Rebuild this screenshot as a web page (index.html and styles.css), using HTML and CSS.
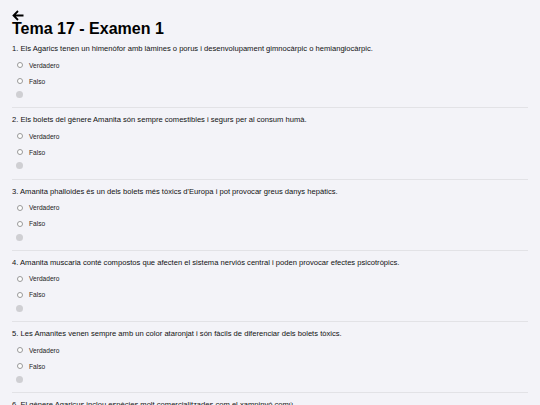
FILE: index.html
```html
<!DOCTYPE html>
<html lang="ca">
<head>
<meta charset="utf-8">
<link rel="stylesheet" href="styles.css">
</head>
<body>
<div class="page">
  <div class="back">
    <svg width="12" height="11" viewBox="0 0 12 11"><path d="M11.5 5.5H1.5M6 1L1.5 5.5L6 10" fill="none" stroke="#000" stroke-width="1.8"/></svg>
  </div>
  <h1 class="title">Tema 17 - Examen 1</h1>
  <div class="questions">
    <div class="q">
      <p class="q-text">1. Els Agarics tenen un himenòfor amb làmines o porus i desenvolupament gimnocàrpic o hemiangiocàrpic.</p>
      <div class="opt"><span class="radio"></span><span>Verdadero</span></div>
      <div class="opt"><span class="radio"></span><span>Falso</span></div>
      <div class="dot"></div>
    </div>
    <div class="q">
      <p class="q-text">2. Els bolets del gènere Amanita són sempre comestibles i segurs per al consum humà.</p>
      <div class="opt"><span class="radio"></span><span>Verdadero</span></div>
      <div class="opt"><span class="radio"></span><span>Falso</span></div>
      <div class="dot"></div>
    </div>
    <div class="q">
      <p class="q-text">3. Amanita phalloides és un dels bolets més tòxics d'Europa i pot provocar greus danys hepàtics.</p>
      <div class="opt"><span class="radio"></span><span>Verdadero</span></div>
      <div class="opt"><span class="radio"></span><span>Falso</span></div>
      <div class="dot"></div>
    </div>
    <div class="q">
      <p class="q-text">4. Amanita muscaria conté compostos que afecten el sistema nerviós central i poden provocar efectes psicotròpics.</p>
      <div class="opt"><span class="radio"></span><span>Verdadero</span></div>
      <div class="opt"><span class="radio"></span><span>Falso</span></div>
      <div class="dot"></div>
    </div>
    <div class="q">
      <p class="q-text">5. Les Amanites venen sempre amb un color ataronjat i són fàcils de diferenciar dels bolets tòxics.</p>
      <div class="opt"><span class="radio"></span><span>Verdadero</span></div>
      <div class="opt"><span class="radio"></span><span>Falso</span></div>
      <div class="dot"></div>
    </div>
    <div class="q">
      <p class="q-text">6. El gènere Agaricus inclou espècies molt comercialitzades com el xampinyó comú.</p>
      <div class="opt"><span class="radio"></span><span>Verdadero</span></div>
      <div class="opt"><span class="radio"></span><span>Falso</span></div>
      <div class="dot"></div>
    </div>
  </div>
</div>
</body>
</html>
```
FILE: styles.css
```css
html, body {
  margin: 0;
  padding: 0;
  background: #f3f3f8;
  font-family: "Liberation Sans", Arial, sans-serif;
  color: #111;
}
.page {
  padding: 9px 12px 0 12px;
}
.back {
  height: 12px;
  display: flex;
  align-items: center;
}
.back svg { display: block; }
.title {
  margin: 0;
  font-size: 16px;
  line-height: 16px;
  font-weight: bold;
  color: #000;
}
.q {
  border-bottom: 1px solid #e2e2e6;
  padding: 7px 0 9.25px 0;
  width: 516px;
}
.q-text {
  margin: 0 0 3px 0;
  font-size: 7.6px;
  line-height: 10px;
  color: #111;
}
.opt {
  display: flex;
  align-items: center;
  height: 16px;
  padding-left: 5px;
  font-size: 6.6px;
  color: #222;
}
.radio {
  width: 4px;
  height: 4px;
  border: 0.8px solid #999;
  border-radius: 50%;
  margin-right: 6px;
  background: #fff;
}
.dot {
  width: 7px;
  height: 7px;
  border-radius: 50%;
  background: #cfcfd3;
  margin: 2px 0 0 4px;
}
```
